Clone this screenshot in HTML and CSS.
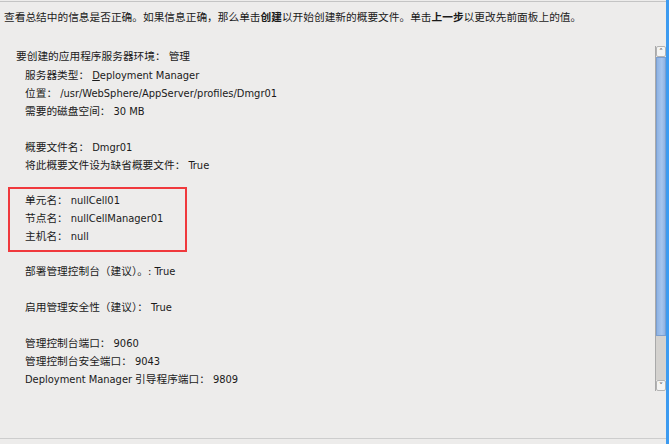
FILE: index.html
```html
<!DOCTYPE html>
<html lang="zh-CN">
<head>
    <meta charset="UTF-8">
    <title>概要文件摘要</title>
    <link rel="stylesheet" href="styles.css">
</head>
<body>
    <div class="window">
        <div class="main">
            <p class="intro">查看总结中的信息是否正确。如果信息正确，那么单击<b>创建</b>以开始创建新的概要文件。单击<b>上一步</b>以更改先前面板上的值。</p>
            <div class="pane">
                <div class="summary">
                    <div class="line top-line">要创建的应用程序服务器环境： 管理</div>
                    <div class="group">
                        <div class="line">服务器类型： <span class="val"><u>D</u>eployment Manager</span></div>
                        <div class="line">位置： <span class="val">/usr/WebSphere/AppServer/profiles/Dmgr01</span></div>
                        <div class="line">需要的磁盘空间： <span class="val">30 MB</span></div>
                    </div>
                    <div class="group">
                        <div class="line">概要文件名： <span class="val">Dmgr01</span></div>
                        <div class="line">将此概要文件设为缺省概要文件： <span class="val">True</span></div>
                    </div>
                    <div class="highlight">
                        <div class="line">单元名： <span class="val">nullCell01</span></div>
                        <div class="line">节点名： <span class="val">nullCellManager01</span></div>
                        <div class="line">主机名： <span class="val">null</span></div>
                    </div>
                    <div class="group">
                        <div class="line">部署管理控制台（建议）。<span class="val">: True</span></div>
                    </div>
                    <div class="group">
                        <div class="line">启用管理安全性（建议）： <span class="val">True</span></div>
                    </div>
                    <div class="group">
                        <div class="line">管理控制台端口： <span class="val">9060</span></div>
                        <div class="line">管理控制台安全端口： <span class="val">9043</span></div>
                        <div class="line"><span class="val">Deployment Manager</span> 引导程序端口： <span class="val">9809</span></div>
                    </div>
                </div>
                <div class="scrollbar">
                    <div class="scroll-btn">&#x2C4;</div>
                    <div class="thumb"></div>
                    <div class="track"></div>
                    <div class="scroll-btn">&#x2C5;</div>
                </div>
            </div>
            <div class="footer"></div>
        </div>
        <div class="edge"></div>
    </div>
</body>
</html>
```

FILE: styles.css
```css
body {
    margin: 0;
    background-color: #edeceb;
    font-family: 'DejaVu Sans Condensed', 'Liberation Sans', 'Noto Sans CJK TC', sans-serif;
    font-size: 10.7px;
    color: #1a1a1a;
}
.window {
    width: 669px;
    height: 444px;
    display: flex;
}
.main {
    flex-grow: 1;
    display: flex;
    flex-direction: column;
    margin-top: 1px;
    border-top: 1px solid #c4c4c4;
}
.intro {
    margin: 7px 0 0 4px;
    line-height: 18px;
    height: 37px;
}
.intro b {
    font-weight: bold;
}
.pane {
    display: flex;
    height: 345px;
}
.summary {
    flex-grow: 1;
    padding-top: 2px;
}
.line {
    line-height: 18px;
    height: 18px;
    white-space: nowrap;
}
.val {
    font-size: 11px;
}
.top-line {
    padding-left: 16px;
    margin-bottom: 1px;
}
.group {
    padding-left: 25px;
    margin-bottom: 18px;
}
.highlight {
    width: 160px;
    margin: -6px 0 11px 8px;
    padding: 3px 0 4px 15px;
    border: 2px solid #f0393c;
}
.scrollbar {
    width: 11px;
    display: flex;
    flex-direction: column;
    border-left: 1px solid #a9a9a9;
    box-sizing: border-box;
}
.scroll-btn {
    height: 11px;
    background-color: #f4f4f3;
    border: 1px solid #b3b3b3;
    border-radius: 2px;
    box-sizing: border-box;
    font-size: 9px;
    line-height: 11px;
    text-align: center;
    color: #555;
    overflow: hidden;
}
.thumb {
    height: 279px;
    background: linear-gradient(to right, #8fb3e3, #a6c5ee 60%, #8eb2e2);
    border: 1px solid #7c9fd0;
    box-sizing: border-box;
}
.track {
    flex-grow: 1;
    background-color: #d4d2cf;
}
.footer {
    margin-top: auto;
    height: 5px;
    border-top: 1px solid #cdcdcd;
}
.edge {
    width: 3px;
    background-color: #3d9bf0;
}
```
